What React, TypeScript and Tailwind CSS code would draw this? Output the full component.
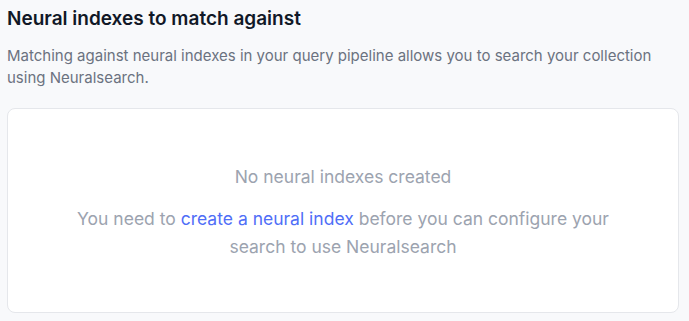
import React from "react";

function EmptyIndexes() {
  return (
    <div className="flex flex-col items-center justify-center h-full text-center pt-1">
      <p className="text-[17.5px] leading-6 text-[#9ca3af]">No neural indexes created</p>
      <p className="mt-4 text-[17.5px] leading-7 text-[#9ca3af] max-w-[545px]">
        You need to{" "}
        <a href="#" className="text-[#4f6ef7]">
          create a neural index
        </a>{" "}
        before you can configure your search to use Neuralsearch
      </p>
    </div>
  );
}

export default function App() {
  return (
    <div
      className="w-[689px] h-[321px] bg-[#f8f9fb] px-[7px] pt-[5px]"
      style={{ fontFamily: "Inter, 'Noto Sans', sans-serif" }}
    >
      <h2 className="text-[19px] font-semibold text-[#111827] leading-7">
        Neural indexes to match against
      </h2>
      <p className="mt-3 text-[15px] leading-[22px] text-[#6b7280]">
        Matching against neural indexes in your query pipeline allows you to search your collection using Neuralsearch.
      </p>
      <div className="mt-[19px] w-[672px] h-[205px] bg-white border border-[#e5e7eb] rounded-lg">
        <EmptyIndexes />
      </div>
    </div>
  );
}
